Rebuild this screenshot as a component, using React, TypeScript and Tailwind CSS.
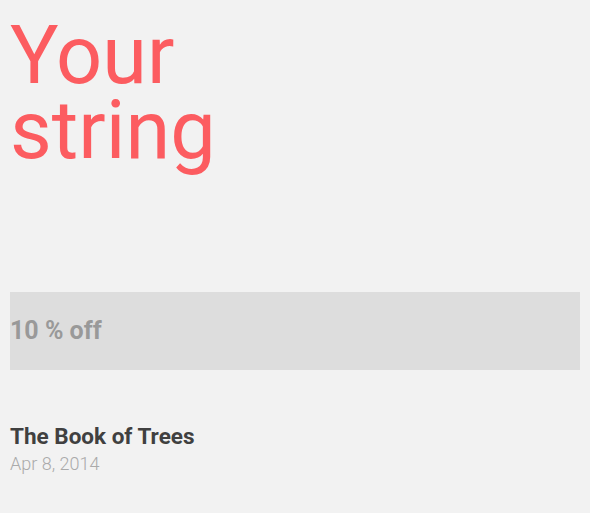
export default function App() {
  return (
    <div className="min-h-[513px] w-full bg-[#f2f2f2] px-[10px] pt-[18px] font-['Roboto',sans-serif]">
      <h1 className="w-[240px] text-[81px] leading-[75px] font-normal text-[#fc5c60]">Your string</h1>
      <div className="mt-[124px] flex h-[78px] items-center bg-[#dddddd]">
        <span className="text-[25px] font-bold text-[#999999]">10 % off</span>
      </div>
      <div className="mt-[53px]">
        <div className="text-[22.5px] leading-[27px] font-bold text-[#404040]">The Book of Trees</div>
        <div className="mt-[2px] text-[18px] leading-[24px] font-light text-[#aaaaaa]">Apr 8, 2014</div>
      </div>
    </div>
  );
}
